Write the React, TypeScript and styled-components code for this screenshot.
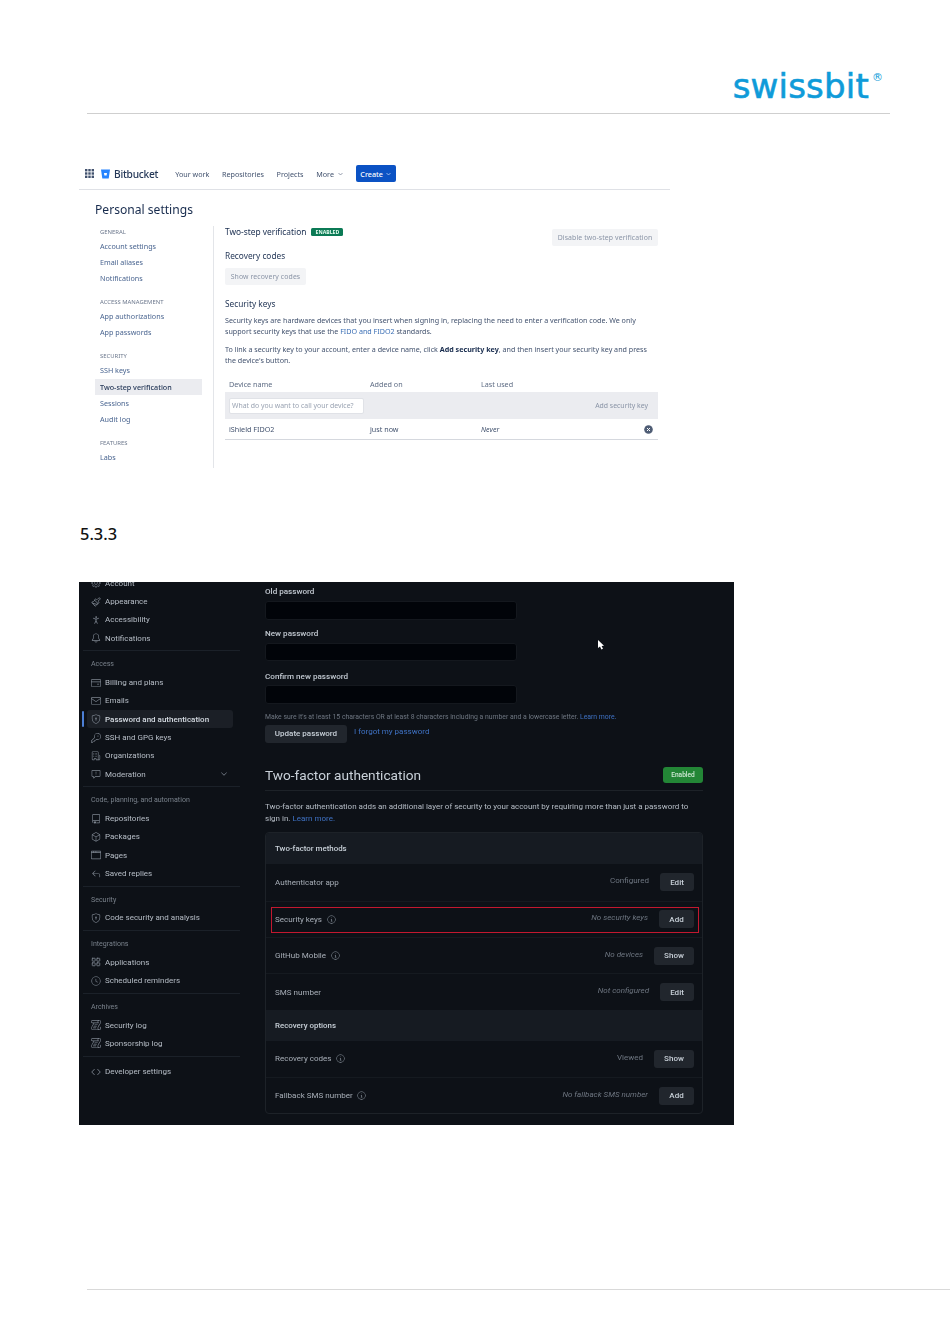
import React from "react";
import styled, { createGlobalStyle } from "styled-components";
import {
  GoGear, GoBell, GoCreditCard, GoMail, GoShieldLock, GoKey,
  GoOrganization, GoReport, GoRepo, GoPackage, GoBrowser, GoReply, GoClock, GoLog,
  GoCode, GoInfo, GoChevronDown,
} from "react-icons/go";
import { Paintbrush, PersonStanding, LayoutGrid } from "lucide-react";

const Global = createGlobalStyle`
  html, body { margin: 0; padding: 0; background: #fff; }
  * { box-sizing: border-box; }
  body { font-family: "Noto Sans", "Liberation Sans", sans-serif; }
`;

const Page = styled.div`
  width: 950px;
  height: 1344px;
  overflow: hidden;
  display: flex;
  flex-direction: column;
`;

const DocHeader = styled.header`
  height: 114px;
  margin-left: 87px;
  width: 803px;
  border-bottom: 1px solid #cfcfcf;
  display: flex;
  justify-content: flex-end;
  align-items: flex-start;
  padding: 68px 7px 0 0;
`;
const Logo = styled.div`
  font-family: "DejaVu Sans", sans-serif;
  font-size: 34px;
  line-height: 36px;
  letter-spacing: 0.2px;
  -webkit-text-stroke: 0.6px #0f9bd9;
  color: #0f9bd9;
  display: flex;
  align-items: flex-start;
`;
const LogoMark = styled.span`
  font-size: 11px;
  line-height: 12px;
  letter-spacing: 0;
  -webkit-text-stroke: 0;
  margin-left: 3px;
  margin-top: 4px;
`;

/* ---------- Bitbucket screenshot ---------- */
const BbShot = styled.section`
  margin: 46px 0 0 79px;
  width: 591px;
  height: 310px;
  color: #42526e;
  font-size: 7.4px;
  filter: blur(0.25px);
`;
const BbNav = styled.nav`
  height: 30px;
  border-bottom: 1px solid #dfe1e6;
  display: flex;
  align-items: center;
  padding-left: 6px;
  padding-bottom: 2px;
`;
const AppGrid = styled.svg`
  width: 9px;
  height: 9px;
  margin-right: 7px;
`;
const BbMark = styled.svg`
  width: 9px;
  height: 10px;
  margin-right: 4px;
`;
const BbName = styled.span`
  font-size: 10.2px;
  letter-spacing: -0.25px;
  font-weight: 500;
  color: #253858;
  margin-right: 17px;
`;
const NavItem = styled.span`
  font-size: 7.2px;
  color: #42526e;
  margin-right: 12.7px;
  display: inline-flex;
  align-items: center;
  gap: 4px;
`;
const CreateButton = styled.span`
  width: 40px;
  height: 17px;
  border-radius: 2px;
  background: #0b52c4;
  color: #fff;
  font-size: 7.2px;
  font-weight: 500;
  display: flex;
  align-items: center;
  justify-content: center;
  gap: 3px;
`;
const BbTitle = styled.h1`
  margin: 0;
  padding: 2px 0 0 16px;
  height: 36px;
  display: flex;
  align-items: center;
  font-size: 12.1px;
  font-weight: 400;
  color: #172b4d;
`;
const BbBody = styled.div`
  display: flex;
  height: 242px;
`;
const BbSide = styled.aside`
  width: 135px;
  padding-left: 16px;
  padding-right: 11px;
  border-right: 1px solid #e3e5e9;
  display: flex;
  flex-direction: column;
`;
const BbSideHead = styled.div<{ $top?: number }>`
  font-size: 5.9px;
  color: #6b778c;
  text-transform: uppercase;
  padding-left: 5px;
  height: 12px;
  line-height: 12px;
  margin-top: ${(p) => p.$top ?? 0}px;
`;
const BbSideLink = styled.div<{ $active?: boolean }>`
  height: 16.2px;
  line-height: 16px;
  padding-left: 5px;
  font-size: 7.2px;
  color: ${(p) => (p.$active ? "#253858" : "#4a6590")};
  background: ${(p) => (p.$active ? "#ebecf0" : "transparent")};
  font-weight: ${(p) => (p.$active ? 500 : 400)};
`;
const BbMain = styled.main`
  width: 455px;
  padding-left: 11px;
  padding-right: 11px;
  display: flex;
  flex-direction: column;
`;
const BbStatusRow = styled.div`
  display: flex;
  align-items: flex-start;
  height: 30px;
`;
const BbStatusTitle = styled.span`
  font-size: 8.35px;
  color: #172b4d;
  line-height: 12px;
`;
const Lozenge = styled.span`
  margin: 2px 0 0 5px;
  width: 32px;
  height: 8px;
  border-radius: 1.5px;
  background: #0b7a55;
  color: #e3fcef;
  font-size: 5.2px;
  font-weight: 700;
  line-height: 8px;
  text-align: center;
`;
const BbGhostBtn = styled.span<{ $w: number }>`
  width: ${(p) => p.$w}px;
  height: 17px;
  background: #f3f4f6;
  color: #8a94a6;
  font-size: 6.9px;
  letter-spacing: 0.1px;
  display: flex;
  align-items: center;
  justify-content: center;
  border-radius: 2px;
`;
const BbDisable = styled(BbGhostBtn)`
  margin-left: auto;
  margin-top: 3px;
`;
const BbH4 = styled.div<{ $top: number }>`
  font-size: 8.3px;
  color: #253858;
  line-height: 12px;
  margin-top: ${(p) => p.$top}px;
`;
const BbRecoveryBtn = styled(BbGhostBtn)`
  margin-top: 6px;
`;
const BbPara = styled.p<{ $top: number }>`
  margin: ${(p) => p.$top}px 0 0;
  max-width: 425px;
  font-size: 7.15px;
  line-height: 10.6px;
  color: #42526e;
  strong { color: #172b4d; font-weight: 700; }
  a { color: #3b6fb5; }
`;
const BbTableHead = styled.div`
  margin-top: 12px;
  height: 15px;
  padding-bottom: 2px;
  display: grid;
  grid-template-columns: 141px 111px 1fr;
  padding-left: 4px;
  align-items: center;
  font-size: 7.2px;
  color: #5e6c84;
`;
const BbAddRow = styled.div`
  height: 27px;
  background: #ebecf0;
  display: flex;
  align-items: center;
  justify-content: space-between;
  padding: 0 10px 0 4px;
`;
const BbInput = styled.div`
  width: 135px;
  height: 16px;
  border-radius: 2px;
  background: #fff;
  border: 1px solid #e0e2e7;
  color: #9aa3b2;
  font-size: 6.9px;
  line-height: 14px;
  padding-left: 2px;
  white-space: nowrap;
`;
const BbAddLabel = styled.span`
  color: #8a94a6;
  font-size: 6.9px;
`;
const BbDeviceRow = styled.div`
  height: 21px;
  border-bottom: 1px solid #d5d8de;
  display: grid;
  grid-template-columns: 141px 111px 1fr 14px;
  padding-left: 4px;
  align-items: center;
  font-size: 7.2px;
  color: #42526e;
  em { font-style: italic; }
`;
const RemoveIcon = styled.svg`
  width: 9px;
  height: 9px;
`;

/* ---------- section number ---------- */
const SectionNumber = styled.h2`
  margin: 53px 0 0 80px;
  height: 22px;
  line-height: 22px;
  font-size: 16.4px;
  font-weight: 500;
  color: #111;
  font-family: "Noto Sans", sans-serif;
`;

/* ---------- GitHub screenshot ---------- */
const GhShot = styled.section`
  position: relative;
  margin: 37px 0 0 79px;
  width: 655px;
  height: 543px;
  background: #0d1117;
  overflow: hidden;
  display: flex;
  color: #c9d1d9;
  font-family: Roboto, "Noto Sans", sans-serif;
  filter: blur(0.25px);
`;
const GhSide = styled.aside`
  width: 161px;
  margin-top: -8px;
  padding-left: 4px;
  flex: none;
`;
const GhDivider = styled.div<{ $extra?: number }>`
  height: 1px;
  background: #1b2129;
  margin: 3px 0 ${(p) => 4 + (p.$extra ?? 0)}px;
`;
const GhSideHead = styled.div`
  height: 18px;
  line-height: 18px;
  padding-left: 8px;
  font-size: 7.05px;
  color: #79818b;
  white-space: nowrap;
`;
const GhSideRow = styled.div<{ $active?: boolean }>`
  position: relative;
  height: 18.35px;
  margin-left: 4px;
  width: 146px;
  padding-left: 4px;
  display: flex;
  align-items: center;
  gap: 4px;
  font-size: 8px;
  font-weight: ${(p) => (p.$active ? 500 : 400)};
  color: ${(p) => (p.$active ? "#d5dbe2" : "#b6bdc6")};
  background: ${(p) => (p.$active ? "#1b1f26" : "transparent")};
  border-radius: 3px;
  white-space: nowrap;
  svg { width: 10px; height: 10px; color: #7d8590; flex: none; }
`;
const ActiveBar = styled.span`
  position: absolute;
  left: -5px;
  top: 1px;
  bottom: 1px;
  width: 2px;
  border-radius: 1px;
  background: #4c7fd6;
`;
const RowChevron = styled(GoChevronDown)`
  margin-left: auto;
  margin-right: 4px;
`;
const GhMain = styled.main`
  margin-left: 25px;
  width: 438px;
  display: flex;
  flex-direction: column;
`;
const GhLabel = styled.label<{ $top: number }>`
  margin-top: ${(p) => p.$top}px;
  height: 12px;
  line-height: 12px;
  font-size: 8.1px;
  font-weight: 500;
  color: #c3cad2;
`;
const GhInput = styled.div<{ $gap?: number }>`
  margin-top: ${(p) => p.$gap ?? 4}px;
  width: 252px;
  height: 18.5px;
  background: #010409;
  border: 1px solid #14181e;
  border-radius: 3px;
`;
const GhHint = styled.div`
  margin-top: 9.5px;
  height: 9px;
  line-height: 9px;
  font-size: 6.85px;
  color: #6e7681;
  white-space: nowrap;
  a { color: #3f72c4; }
`;
const GhActions = styled.div`
  margin-top: 2.5px;
  display: flex;
  gap: 7px;
`;
const GhButton = styled.span<{ $w?: number; $h?: number }>`
  width: ${(p) => p.$w ?? 34}px;
  height: ${(p) => p.$h ?? 18}px;
  background: #21262d;
  border-radius: 3px;
  color: #c9d1d9;
  font-size: 8px;
  font-weight: 500;
  display: flex;
  align-items: center;
  justify-content: center;
  flex: none;
`;
const GhLink = styled.a`
  color: #3f72c4;
  font-size: 8px;
  line-height: 14px;
`;
const GhTitleRow = styled.div`
  margin-top: 22px;
  height: 26.5px;
  border-bottom: 1px solid #1d2228;
  display: flex;
  justify-content: space-between;
  align-items: flex-start;
`;
const GhTitle = styled.h2`
  margin: 0;
  font-size: 13.65px;
  font-weight: 400;
  line-height: 20px;
  color: #c9d1d9;
`;
const EnabledBadge = styled.span`
  margin-top: 2px;
  width: 40px;
  height: 16px;
  border-radius: 3px;
  background: #238636;
  color: #cfe8d5;
  font-size: 6.6px;
  font-weight: 500;
  line-height: 16px;
  text-align: center;
`;
const GhPara = styled.p`
  margin: 9.5px 0 0;
  font-size: 8px;
  line-height: 12.4px;
  color: #b6bdc6;
  a { color: #3f72c4; }
`;
const GhBox = styled.div`
  margin-top: 7px;
  width: 438px;
  height: 282px;
  border: 1px solid #1d2228;
  border-radius: 4px;
  overflow: hidden;
  display: flex;
  flex-direction: column;
`;
const GhBoxHead = styled.div<{ $h: number }>`
  height: ${(p) => p.$h}px;
  background: #161b22;
  padding-left: 9px;
  display: flex;
  align-items: center;
  font-size: 7.9px;
  font-weight: 500;
  color: #c9d1d9;
`;
const GhBoxRow = styled.div<{ $h: number; $line?: boolean }>`
  height: ${(p) => p.$h}px;
  padding: 0 8px 0 9px;
  display: flex;
  align-items: center;
  border-top: ${(p) => (p.$line ? "1px solid #151a20" : "none")};
  font-size: 8.05px;
  color: #a7aeb7;
`;
const InfoMark = styled(GoInfo)`
  width: 9px;
  height: 9px;
  margin-left: 4.5px;
  color: #8b949e;
`;
const GhStatus = styled.span<{ $italic?: boolean }>`
  margin-left: auto;
  margin-right: 11px;
  margin-top: -3px;
  font-size: 8px;
  font-style: ${(p) => (p.$italic ? "italic" : "normal")};
  color: #6e7681;
`;
const RedFrame = styled.div`
  position: absolute;
  left: 192px;
  top: 325px;
  width: 428px;
  height: 26px;
  border: 1px solid #c3182f;
`;
const Cursor = styled.svg`
  position: absolute;
  left: 518px;
  top: 58px;
  width: 7px;
  height: 10px;
`;

const DocFooter = styled.footer`
  margin: 164px 0 0 87px;
  height: 1px;
  background: #d9d9d9;
`;

type SideItem = { label: string; icon: React.ReactNode; active?: boolean; chevron?: boolean };
type SideGroup = { head?: string; items: SideItem[] };

const sideGroups: SideGroup[] = [
  { items: [
    { label: "Account", icon: <GoGear /> },
    { label: "Appearance", icon: <Paintbrush /> },
    { label: "Accessibility", icon: <PersonStanding /> },
    { label: "Notifications", icon: <GoBell /> },
  ] },
  { head: "Access", items: [
    { label: "Billing and plans", icon: <GoCreditCard /> },
    { label: "Emails", icon: <GoMail /> },
    { label: "Password and authentication", icon: <GoShieldLock />, active: true },
    { label: "SSH and GPG keys", icon: <GoKey /> },
    { label: "Organizations", icon: <GoOrganization /> },
    { label: "Moderation", icon: <GoReport />, chevron: true },
  ] },
  { head: "Code, planning, and automation", items: [
    { label: "Repositories", icon: <GoRepo /> },
    { label: "Packages", icon: <GoPackage /> },
    { label: "Pages", icon: <GoBrowser /> },
    { label: "Saved replies", icon: <GoReply /> },
  ] },
  { head: "Security", items: [{ label: "Code security and analysis", icon: <GoShieldLock /> }] },
  { head: "Integrations", items: [
    { label: "Applications", icon: <LayoutGrid /> },
    { label: "Scheduled reminders", icon: <GoClock /> },
  ] },
  { head: "Archives", items: [
    { label: "Security log", icon: <GoLog /> },
    { label: "Sponsorship log", icon: <GoLog /> },
  ] },
  { items: [{ label: "Developer settings", icon: <GoCode /> }] },
];

const bbSide: { head: string; top: number; links: string[] }[] = [
  { head: "General", top: 0, links: ["Account settings", "Email aliases", "Notifications"] },
  { head: "Access management", top: 9.4, links: ["App authorizations", "App passwords"] },
  { head: "Security", top: 10, links: ["SSH keys", "Two-step verification", "Sessions", "Audit log"] },
  { head: "Features", top: 10, links: ["Labs"] },
];

type MethodRow = { label: string; info?: boolean; status: string; italic?: boolean; action: string; w: number };
const methods: MethodRow[] = [
  { label: "Authenticator app", status: "Configured", action: "Edit", w: 34 },
  { label: "Security keys", info: true, status: "No security keys", italic: true, action: "Add", w: 35 },
  { label: "GitHub Mobile", info: true, status: "No devices", italic: true, action: "Show", w: 40 },
  { label: "SMS number", status: "Not configured", italic: true, action: "Edit", w: 34 },
];
const recovery: MethodRow[] = [
  { label: "Recovery codes", info: true, status: "Viewed", action: "Show", w: 40 },
  { label: "Fallback SMS number", info: true, status: "No fallback SMS number", italic: true, action: "Add", w: 35 },
];

const renderRow = (r: MethodRow, i: number) => (
  <GhBoxRow key={r.label} $h={36.6} $line={i > 0}>
    {r.label}
    {r.info && <InfoMark />}
    <GhStatus $italic={r.italic}>{r.status}</GhStatus>
    <GhButton $w={r.w}>{r.action}</GhButton>
  </GhBoxRow>
);

export default function App() {
  return (
    <Page>
      <Global />
      <DocHeader>
        <Logo>swissbit<LogoMark>®</LogoMark></Logo>
      </DocHeader>

      <BbShot>
        <BbNav>
          <AppGrid viewBox="0 0 9 9">
            {[0, 3.3, 6.6].flatMap((y) =>
              [0, 3.3, 6.6].map((x) => <rect key={`${x}-${y}`} x={x} y={y} width="2.4" height="2.4" fill="#42526e" />)
            )}
          </AppGrid>
          <BbMark viewBox="0 0 9 10">
            <path d="M0 .5h9L7.7 9.5H1.3z" fill="#2684ff" />
            <path d="M3 4h3l-.4 2.6H3.4z" fill="#fff" />
          </BbMark>
          <BbName>Bitbucket</BbName>
          <NavItem>Your work</NavItem>
          <NavItem>Repositories</NavItem>
          <NavItem>Projects</NavItem>
          <NavItem>
            More
            <svg width="5" height="4" viewBox="0 0 5 4"><path d="M.5 1l2 2 2-2" fill="none" stroke="#6b778c" strokeWidth=".7" /></svg>
          </NavItem>
          <CreateButton>
            Create
            <svg width="5" height="4" viewBox="0 0 5 4"><path d="M.5 1l2 2 2-2" fill="none" stroke="#cfe0ff" strokeWidth=".7" /></svg>
          </CreateButton>
        </BbNav>
        <BbTitle>Personal settings</BbTitle>
        <BbBody>
          <BbSide>
            {bbSide.map((g) => (
              <React.Fragment key={g.head}>
                <BbSideHead $top={g.top}>{g.head}</BbSideHead>
                {g.links.map((l) => (
                  <BbSideLink key={l} $active={l === "Two-step verification"}>{l}</BbSideLink>
                ))}
              </React.Fragment>
            ))}
          </BbSide>
          <BbMain>
            <BbStatusRow>
              <BbStatusTitle>Two-step verification</BbStatusTitle>
              <Lozenge>ENABLED</Lozenge>
              <BbDisable $w={106}>Disable two-step verification</BbDisable>
            </BbStatusRow>
            <BbH4 $top={-6}>Recovery codes</BbH4>
            <BbRecoveryBtn $w={81}>Show recovery codes</BbRecoveryBtn>
            <BbH4 $top={13}>Security keys</BbH4>
            <BbPara $top={5}>
              Security keys are hardware devices that you insert when signing in, replacing the need to enter a verification code. We only support security keys that use the <a>FIDO and FIDO2</a> standards.
            </BbPara>
            <BbPara $top={8}>
              To link a security key to your account, enter a device name, click <strong>Add security key</strong>, and then insert your security key and press the device's button.
            </BbPara>
            <BbTableHead>
              <span>Device name</span>
              <span>Added on</span>
              <span>Last used</span>
            </BbTableHead>
            <BbAddRow>
              <BbInput>What do you want to call your device?</BbInput>
              <BbAddLabel>Add security key</BbAddLabel>
            </BbAddRow>
            <BbDeviceRow>
              <span>iShield FIDO2</span>
              <span>just now</span>
              <em>Never</em>
              <RemoveIcon viewBox="0 0 9 9">
                <circle cx="4.5" cy="4.5" r="4.3" fill="#4f5d75" />
                <path d="M3 3l3 3M6 3L3 6" stroke="#fff" strokeWidth="1" />
              </RemoveIcon>
            </BbDeviceRow>
          </BbMain>
        </BbBody>
      </BbShot>

      <SectionNumber>5.3.3</SectionNumber>

      <GhShot>
        <GhSide>
          {sideGroups.map((g, gi) => (
            <React.Fragment key={g.head ?? `g${gi}`}>
              {gi > 0 && <GhDivider $extra={gi === sideGroups.length - 1 ? 2 : 0} />}
              {g.head && <GhSideHead>{g.head}</GhSideHead>}
              {g.items.map((it) => (
                <GhSideRow key={it.label} $active={it.active}>
                  {it.active && <ActiveBar />}
                  {it.icon}
                  {it.label}
                  {it.chevron && <RowChevron />}
                </GhSideRow>
              ))}
            </React.Fragment>
          ))}
        </GhSide>
        <GhMain>
          <GhLabel $top={3}>Old password</GhLabel>
          <GhInput />
          <GhLabel $top={7}>New password</GhLabel>
          <GhInput />
          <GhLabel $top={8.5}>Confirm new password</GhLabel>
          <GhInput $gap={3.5} />
          <GhHint>
            Make sure it's at least 15 characters OR at least 8 characters including a number and a lowercase letter. <a>Learn more.</a>
          </GhHint>
          <GhActions>
            <GhButton $w={82}>Update password</GhButton>
            <GhLink>I forgot my password</GhLink>
          </GhActions>
          <GhTitleRow>
            <GhTitle>Two-factor authentication</GhTitle>
            <EnabledBadge>Enabled</EnabledBadge>
          </GhTitleRow>
          <GhPara>
            Two-factor authentication adds an additional layer of security to your account by requiring more than just a password to sign in. <a>Learn more.</a>
          </GhPara>
          <GhBox>
            <GhBoxHead $h={31}>Two-factor methods</GhBoxHead>
            {methods.map(renderRow)}
            <GhBoxHead $h={31}>Recovery options</GhBoxHead>
            {recovery.map(renderRow)}
          </GhBox>
        </GhMain>
        <RedFrame />
        <Cursor viewBox="0 0 7 10">
          <path d="M1 0v8l2-1.6L4.4 9.500 6 8.800 4.600 6 7 5.800z" fill="#fff" />
        </Cursor>
      </GhShot>

      <DocFooter />
    </Page>
  );
}
